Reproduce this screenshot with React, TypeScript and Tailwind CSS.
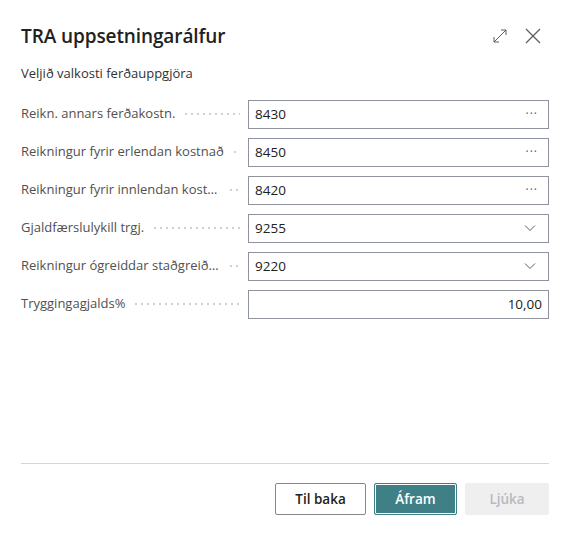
import React from 'react';

type Field = {
  label: string;
  value: string;
  kind: 'lookup' | 'select' | 'number';
  clip?: boolean;
};

const fields: Field[] = [
  { label: 'Reikn. annars ferðakostn.', value: '8430', kind: 'lookup' },
  { label: 'Reikningur fyrir erlendan kostnað', value: '8450', kind: 'lookup' },
  { label: 'Reikningur fyrir innlendan kostnað', value: '8420', kind: 'lookup', clip: true },
  { label: 'Gjaldfærslulykill trgj.', value: '9255', kind: 'select' },
  { label: 'Reikningur ógreiddar staðgreiðslu', value: '9220', kind: 'select', clip: true },
  { label: 'Tryggingagjalds%', value: '10,00', kind: 'number' },
];

const ExpandIcon = () => (
  <svg width="16" height="16" viewBox="0 0 16 16" fill="none" stroke="#605e5c" strokeWidth="1">
    <path d="M2 14 L14 2 M9 2 H14 V7 M2 9 V14 H7" />
  </svg>
);

const CloseIcon = () => (
  <svg width="16" height="16" viewBox="0 0 16 16" fill="none" stroke="#605e5c" strokeWidth="1.3">
    <path d="M1 1 L15 15 M15 1 L1 15" />
  </svg>
);

const Chevron = () => (
  <svg width="12" height="8" viewBox="0 0 12 8" fill="none" stroke="#605e5c" strokeWidth="1">
    <path d="M1 1.5 L6 6.5 L11 1.5" />
  </svg>
);

const FieldRow: React.FC<{ field: Field }> = ({ field }) => (
  <div className="flex items-center h-[29px]">
    <div className="w-[227px] flex items-center min-w-0">
      <span
        className={
          field.clip
            ? 'truncate max-w-[199px] text-[13px] text-[#505050] shrink-0'
            : 'whitespace-nowrap text-[13px] text-[#505050] shrink-0'
        }
      >
        {field.label}
      </span>
      <div className="flex-1 h-[2px] mx-[8px] bg-[radial-gradient(circle,#d2d0ce_0.8px,transparent_1px)] bg-[length:6px_2px] bg-repeat-x" />
    </div>
    <div className="w-[301px] h-[29px] border border-[#8e939e] flex items-center px-[6px] text-[13.5px] text-[#212121]">
      {field.kind === 'number' ? (
        <span className="ml-auto">{field.value}</span>
      ) : (
        <>
          <span className="flex-1">{field.value}</span>
          {field.kind === 'lookup' ? (
            <span className="text-[#605e5c] text-[12px] tracking-[1px] mr-[4px]">···</span>
          ) : (
            <span className="mr-[6px] flex items-center"><Chevron /></span>
          )}
        </>
      )}
    </div>
  </div>
);

export default function App() {
  return (
    <div className="w-[571px] h-[533px] bg-white flex flex-col font-['Segoe_UI','Open_Sans',sans-serif] text-[#212121]">
      <div className="flex items-center justify-between pl-[21px] pr-[30px] pt-[16px] h-[56px]">
        <h1 className="text-[19px] font-semibold tracking-[-0.1px]">TRA uppsetningarálfur</h1>
        <div className="flex items-center gap-[17px]">
          <ExpandIcon />
          <CloseIcon />
        </div>
      </div>
      <p className="pl-[21px] pt-[8px] text-[13px] text-[#323130]">Veljið valkosti ferðauppgjöra</p>
      <div className="flex flex-col gap-[9px] pl-[21px] pt-[16px]">
        {fields.map((f) => (
          <FieldRow key={f.label} field={f} />
        ))}
      </div>
      <div className="flex-1" />
      <div className="ml-[21px] mr-[22px] border-t border-[#d6d6d6]" />
      <div className="flex justify-end gap-[8px] pr-[22px] pt-[19px] pb-[18px]">
        <button className="w-[91px] h-[32px] border border-[#8a8886] rounded-[2px] text-[13.5px] font-semibold text-[#212121] bg-white">
          Til baka
        </button>
        <button className="w-[83px] h-[32px] rounded-[2px] bg-[#3e8085] border border-[#3e8085] text-[13.5px] font-semibold text-white shadow-[inset_0_0_0_1px_white]">
          Áfram
        </button>
        <button className="w-[84px] h-[32px] rounded-[2px] bg-[#efeff0] text-[13.5px] font-semibold text-[#b8b8bd]">
          Ljúka
        </button>
      </div>
    </div>
  );
}
